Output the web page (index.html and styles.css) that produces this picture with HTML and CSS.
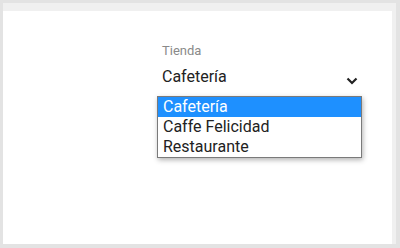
FILE: index.html
```html
<!DOCTYPE html>
<html lang="es">
<head>
<meta charset="UTF-8">
<meta name="viewport" content="width=device-width, initial-scale=1.0">
<title>Tienda</title>
<link rel="stylesheet" href="styles.css">
</head>
<body>

<div class="frame">
    <div class="panel">
        <div class="field">
            <div class="label">Tienda</div>
            <div class="select">
                <span class="value">Cafetería</span>
                <svg class="chevron" width="12" height="8" viewBox="0 0 12 8">
                    <path d="M1.5 1.5 L6 6 L10.5 1.5" fill="none" stroke="#222" stroke-width="2.2"/>
                </svg>
            </div>
            <ul class="options">
                <li class="selected">Cafetería</li>
                <li>Caffe Felicidad</li>
                <li>Restaurante</li>
            </ul>
        </div>
    </div>
</div>

</body>
</html>
```

FILE: styles.css
```css
body {
    margin: 0;
    padding: 0;
    background-color: #e3e3e3;
    font-family: Roboto, "Liberation Sans", Arial, sans-serif;
}

.frame {
    margin: 3px 4px 4px 3px;
    padding: 8px 4px 0 0;
    background-color: #f0f0f0;
}

.panel {
    background-color: white;
    height: 233px;
    display: flex;
    flex-direction: row;
}

.field {
    position: relative;
    margin-left: 154px;
    margin-top: 32px;
    width: 205px;
}

.label {
    font-size: 13px;
    color: #8a8a8a;
    padding-left: 5px;
    line-height: 16px;
}

.select {
    display: flex;
    align-items: center;
    justify-content: space-between;
    padding: 8px 4px 0 5px;
    font-size: 16px;
    color: #222;
    line-height: 20px;
}

.chevron {
    margin-top: 8px;
}

.options {
    position: absolute;
    top: 53px;
    left: 0;
    right: 0;
    margin: 0;
    padding: 0;
    list-style: none;
    background-color: white;
    border: 1px solid #7a7a7a;
    box-shadow: 1px 2px 5px rgba(0, 0, 0, 0.3);
    font-size: 16px;
    color: #222;
}

.options li {
    height: 20px;
    line-height: 20px;
    padding-left: 5px;
}

.options li.selected {
    background-color: #1e90ff;
    color: white;
}
```
